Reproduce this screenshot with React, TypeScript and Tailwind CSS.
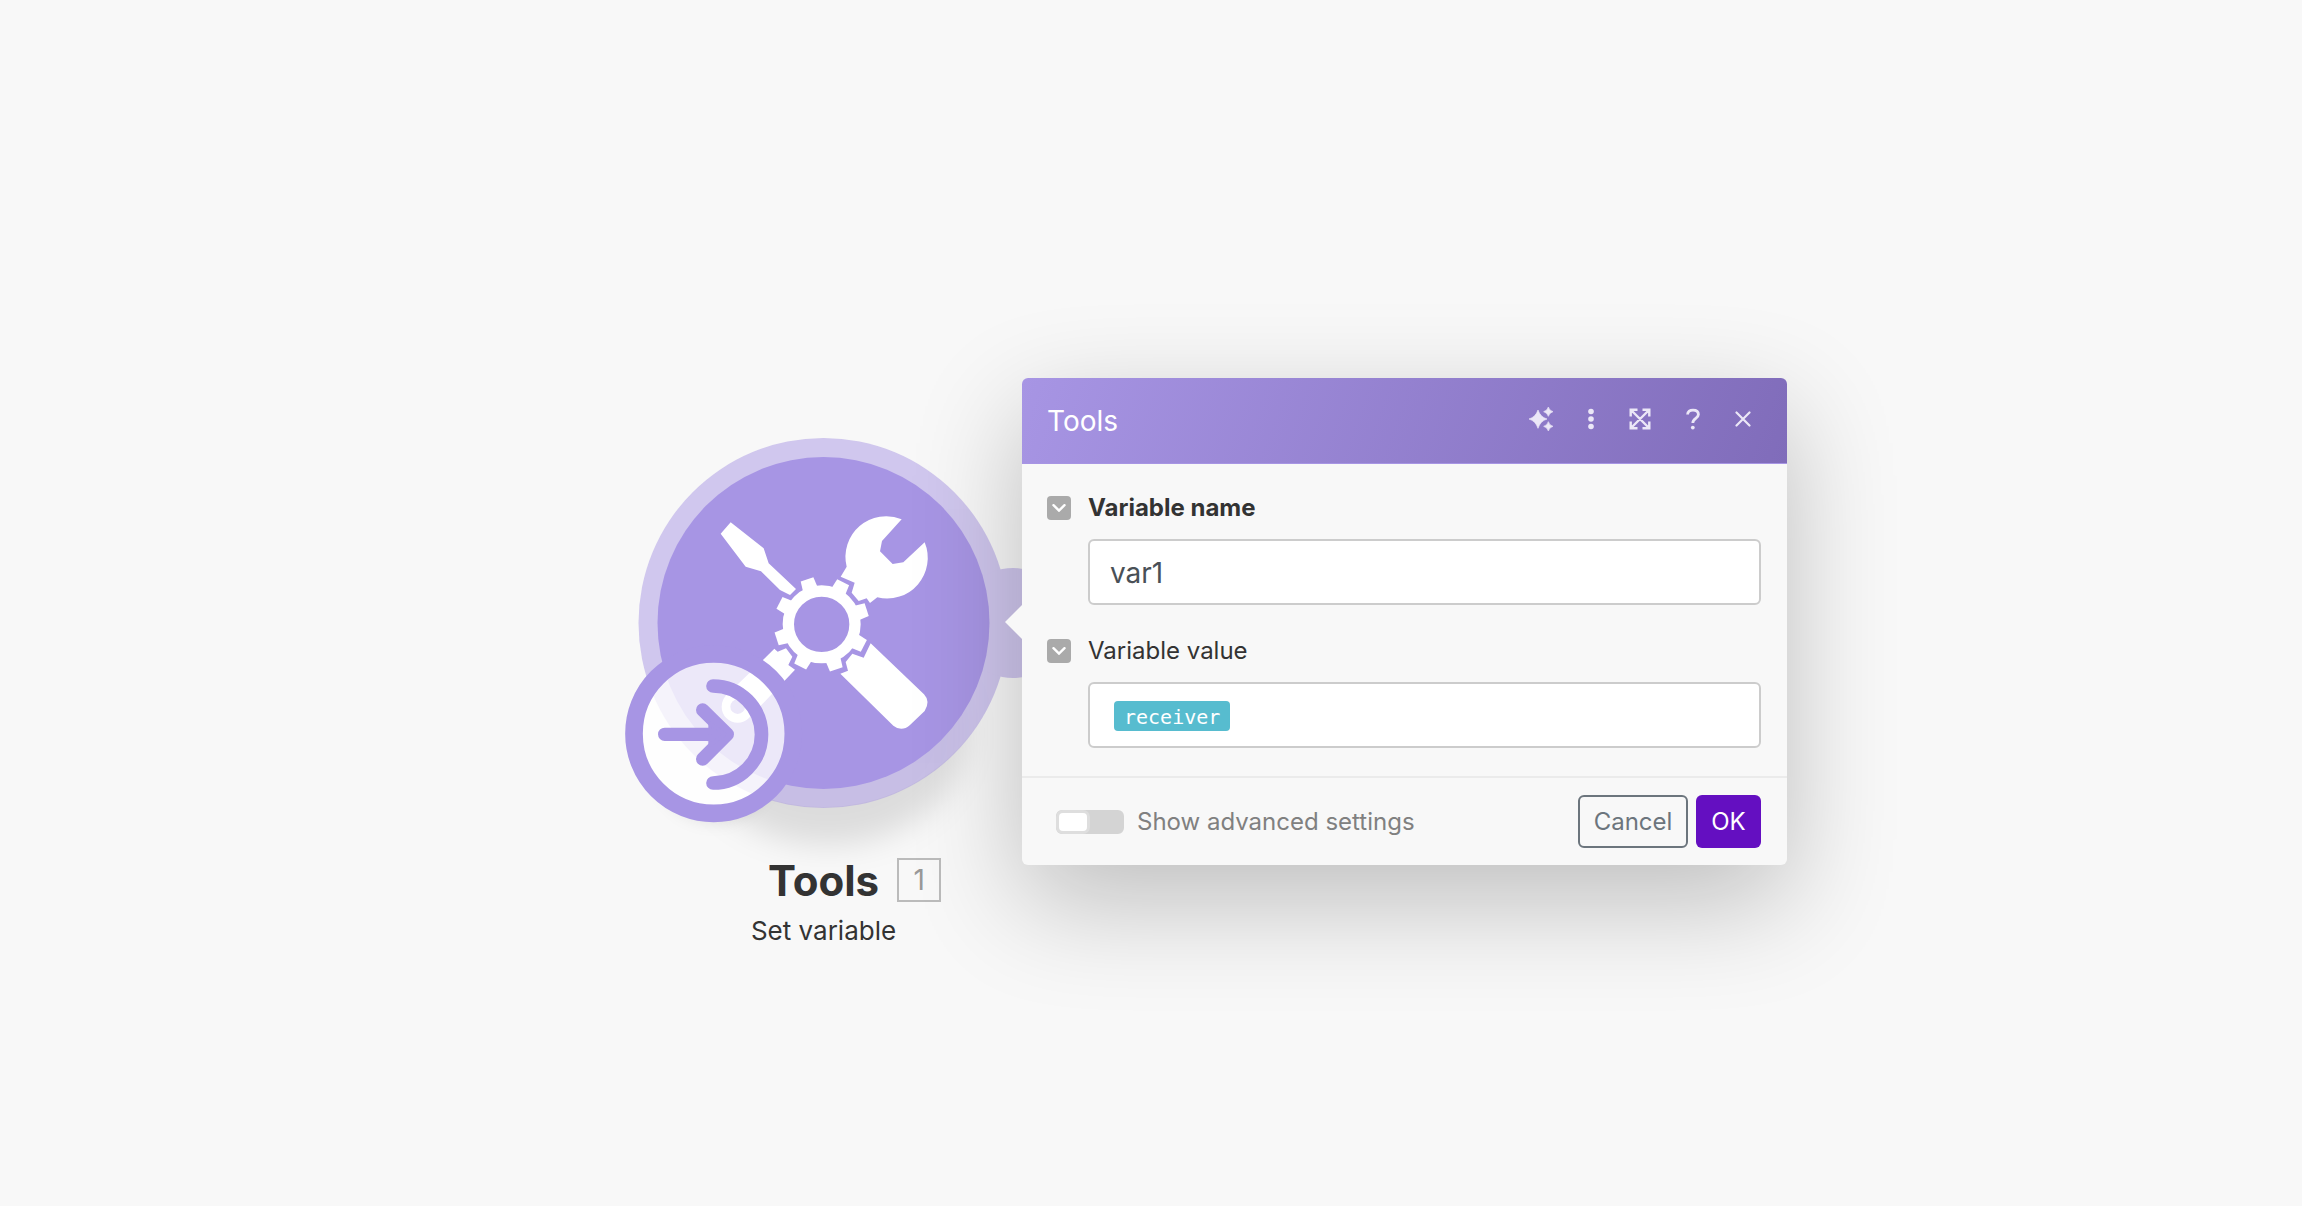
import { useState, type ReactNode } from "react";

const gearTeeth = [27, 72, 117, 162, 207, 252, 297, 342];

function ToolsGlyph() {
  return (
    <svg x="75" y="63" width="240" height="240" viewBox="0 0 720 720" overflow="visible" fill="#fff">
      {/* screwdriver */}
      <path d="M92 67 191 145 206 190 288 267 270 285 240 270 183 214 137 200 62 101Z" />
      <path d="M512 430 672 583Q692 604 674 633L630 675Q605 697 580 677L421 521 444 512 437 486 457 461 491 473Z" />
      {/* wrench */}
      <path d="M605 58A122 122 0 0 0 440 200L422 230 464 248 455 278 476 303 500 295 510 309 532 292A122 122 0 0 0 674 127L610 187 578 192 540 154 546 123Z" />
      <path d="M189 480 223 446 233 455 258 445 277 470 265 495 285 509 150 651 76 589Z" />
      <circle cx="113" cy="620" r="48" />
      <circle cx="113" cy="620" r="22" fill="#a795e4" />
      {/* gear */}
      <circle cx="365" cy="373" r="100" fill="none" stroke="#fff" strokeWidth="34" />
      {gearTeeth.map((angle) => (
        <path
          key={angle}
          d="M108-23 142-20V20L108 23Z"
          transform={`translate(365 373) rotate(${angle})`}
        />
      ))}
    </svg>
  );
}

function SetBadge() {
  return (
    <svg x="-15" y="203" width="200" height="200" viewBox="0 0 600 600" overflow="visible">
      <circle cx="311" cy="281" r="216" fill="#fff" fillOpacity="0.78" />
      <g fill="none" stroke="#a795e4" strokeLinecap="round" strokeLinejoin="round">
        <circle cx="311" cy="281" r="239" strokeWidth="53" />
        <path d="M309 138A145 145 0 0 1 309 429" strokeWidth="41" />
        <path d="M164 283H350M278 210 352 283 278 357" strokeWidth="40" />
        <path d="M300 250 345 283 300 316Z" strokeWidth="10" fill="#a795e4" />
      </g>
    </svg>
  );
}

function ModuleNode() {
  return (
    <section className="mt-[59px] w-[397px] shrink-0 text-[#333]">
      <svg
        className="block h-[386px] w-full overflow-visible"
        viewBox="0 0 397 386"
        role="img"
        aria-label="Tools module"
      >
        <defs>
          <filter id="node-shadow" x="-50%" y="-50%" width="200%" height="200%">
            <feGaussianBlur stdDeviation="15" />
          </filter>
          <filter id="badge-shadow" x="-50%" y="-50%" width="200%" height="200%">
            <feGaussianBlur stdDeviation="7" />
          </filter>
          {/* keeps the shadows out of the translucent halo and badge */}
          <mask id="outside" maskUnits="userSpaceOnUse" x="-60" y="-60" width="540" height="560">
            <rect x="-60" y="-60" width="540" height="560" fill="#fff" />
            <circle cx="198.5" cy="186" r="184" fill="#999" />
            <circle cx="198.5" cy="186" r="160" fill="#000" />
            <circle cx="88.7" cy="296.7" r="80" fill="#000" />
          </mask>
        </defs>
        <g mask="url(#outside)">
          <ellipse cx="203" cy="296" rx="138" ry="112" fill="#000" fillOpacity="0.11" filter="url(#node-shadow)" />
          <ellipse cx="89" cy="317" rx="64" ry="70" fill="#000" fillOpacity="0.07" filter="url(#badge-shadow)" />
        </g>
        <g fill="#a795e4" opacity="0.5">
          <circle cx="198.5" cy="186" r="185" />
          <circle cx="388" cy="186" r="55" />
        </g>
        <circle cx="198.5" cy="186" r="166" fill="#a795e4" />
        <ToolsGlyph />
        <SetBadge />
      </svg>
      <div className="mt-8 grid grid-cols-[1fr_auto_1fr] items-center">
        <h1 className="col-start-2 pt-0.5 text-[42px] font-bold leading-[48px]">Tools</h1>
        <span className="ml-[18px] flex size-11 items-center justify-center border-2 border-[#bbb] text-[28px] leading-none text-[#999]">
          1
        </span>
      </div>
      <p className="mt-[10px] text-center text-[26px] leading-8">Set variable</p>
    </section>
  );
}

function HeaderButton({ label, children }: { label: string; children: ReactNode }) {
  return (
    <button type="button" aria-label={label} className="flex h-6 items-center text-[#ebe7f7]">
      {children}
    </button>
  );
}

function DialogHeader() {
  return (
    <header className="flex h-[86px] items-center justify-between rounded-t-md border-b border-[#a795e4] bg-linear-[110deg] from-[#a795e4] to-[#806cba] pl-[25px] pr-9">
      <h2 id="dialog-title" className="text-[28px] leading-8 text-white">
        Tools
      </h2>
      <div className="mb-1 flex items-center gap-[35px]">
        <HeaderButton label="AI assistant">
          <svg width="24" height="24" viewBox="0 0 72 72" fill="currentColor">
            <path d="M27 9Q34 30 54 36 34 42 27 64 20 42 0 36 20 30 27 9Z" stroke="currentColor" strokeWidth="2" />
            <path d="M58 0Q61 11 72 14 61 17 58 28 55 17 44 14 55 11 58 0ZM58 44Q61 55 72 58 61 61 58 72 55 61 44 58 55 55 58 44Z" stroke="currentColor" strokeWidth="2" />
          </svg>
        </HeaderButton>
        <HeaderButton label="More">
          <svg width="6" height="24" viewBox="0 0 6 24" fill="currentColor">
            <circle cx="3" cy="4.5" r="2.8" />
            <circle cx="3" cy="12" r="2.8" />
            <circle cx="3" cy="19.5" r="2.8" />
          </svg>
        </HeaderButton>
        <HeaderButton label="Expand">
          <svg width="22" height="24" viewBox="0 0 22 24" fill="none" stroke="currentColor" strokeWidth="2.4">
            <path d="M2 3 20 21M20 3 2 21M1.7 9.5V2.7H8.5M13.5 2.7H20.3V9.5M20.3 14.5V21.3H13.5M8.5 21.3H1.7V14.5" />
          </svg>
        </HeaderButton>
        <HeaderButton label="Help">
          <svg width="14" height="24" viewBox="0 0 14 24" fill="none" stroke="currentColor" strokeWidth="2.8">
            <path d="M1.6 7.6C1.6 4.4 4 3.1 7 3.1s5.4 1.5 5.4 4.4c0 4.1-5.6 3.8-5.6 8.6" />
            <circle cx="6.8" cy="20.6" r="1.9" fill="currentColor" stroke="none" />
          </svg>
        </HeaderButton>
        <HeaderButton label="Close">
          <svg width="16" height="24" viewBox="0 0 16 24" fill="none" stroke="currentColor" strokeWidth="2.2" strokeLinecap="round">
            <path d="M1.5 5.5 14.5 18.5M14.5 5.5 1.5 18.5" />
          </svg>
        </HeaderButton>
      </div>
    </header>
  );
}

function CollapseButton({ label }: { label: string }) {
  return (
    <button
      type="button"
      aria-label={label}
      className="flex size-6 items-center justify-center rounded bg-[#aaa]"
    >
      <svg width="14" height="8" viewBox="0 0 14 8" fill="none" stroke="#fff" strokeWidth="2.4" strokeLinecap="round">
        <path d="M1.5 1.2 7 6.6 12.5 1.2" />
      </svg>
    </button>
  );
}

function ToolsDialog() {
  const [name, setName] = useState("var1");
  const [advanced, setAdvanced] = useState(false);

  return (
    <form
      role="dialog"
      aria-labelledby="dialog-title"
      onSubmit={(e) => e.preventDefault()}
      className="relative w-[765px] rounded-md bg-[#f8f8f8] shadow-[0_36px_110px_rgba(0,0,0,0.24)]"
    >
      <span className="absolute -left-[17px] top-[226px] h-9 w-[18px] bg-[#f8f8f8] [clip-path:polygon(0_50%,100%_0,100%_100%)]" />
      <DialogHeader />
      <div className="grid grid-cols-[24px_1fr] items-center gap-x-[17px] pb-7 pl-[25px] pr-[26px] pt-7">
        <CollapseButton label="Collapse variable name" />
        <label htmlFor="variable-name" className="text-2xl font-bold leading-8 text-[#333]">
          Variable name
        </label>
        <input
          id="variable-name"
          type="text"
          value={name}
          onChange={(e) => setName(e.target.value)}
          className="col-start-2 mt-[15px] h-[66px] w-full rounded-md border-2 border-[#ccc] bg-white px-5 pt-0.5 text-[28px] text-[#495057] outline-none"
        />
        <div className="col-span-2 h-[30px]" />
        <CollapseButton label="Collapse variable value" />
        <span id="variable-value" className="text-2xl leading-8 text-[#333]">
          Variable value
        </span>
        <div
          role="textbox"
          tabIndex={0}
          aria-labelledby="variable-value"
          className="col-start-2 mt-[15px] flex h-[66px] items-center rounded-md border-2 border-[#ccc] bg-white px-6 pt-0.5"
        >
          <span className="h-[30px] rounded bg-[#57bccf] px-[10px] font-['DejaVu_Sans_Mono',monospace] text-xl leading-8 text-white">
            receiver
          </span>
        </div>
      </div>
      <footer className="flex items-center justify-between border-t-2 border-[#ebebeb] py-[17px] pl-[34px] pr-[26px]">
        <label className="flex items-center gap-[13px] text-2xl leading-8 text-[#808080]">
          <input
            type="checkbox"
            checked={advanced}
            onChange={(e) => setAdvanced(e.target.checked)}
            className="flex h-6 w-[68px] appearance-none items-center rounded-md border-[3px] border-[#d4d4d4] bg-[#d4d4d4] before:h-[18px] before:w-7 before:rounded before:bg-white before:shadow-[0_0_0_3px_#dedede] checked:justify-end"
          />
          Show advanced settings
        </label>
        <div className="flex gap-2">
          <button
            type="button"
            className="h-[53px] w-[110px] rounded-md border-2 border-[#6c757d] text-2xl text-[#6c757d]"
          >
            Cancel
          </button>
          <button type="submit" className="h-[53px] w-[65px] rounded-md bg-[#640fc1] text-2xl text-white">
            OK
          </button>
        </div>
      </footer>
    </form>
  );
}

export default function App() {
  return (
    <main className="flex min-h-screen items-start justify-center bg-[#f8f8f8] pl-[110px] pt-[378px] font-[Inter,sans-serif]">
      <ModuleNode />
      <ToolsDialog />
    </main>
  );
}
